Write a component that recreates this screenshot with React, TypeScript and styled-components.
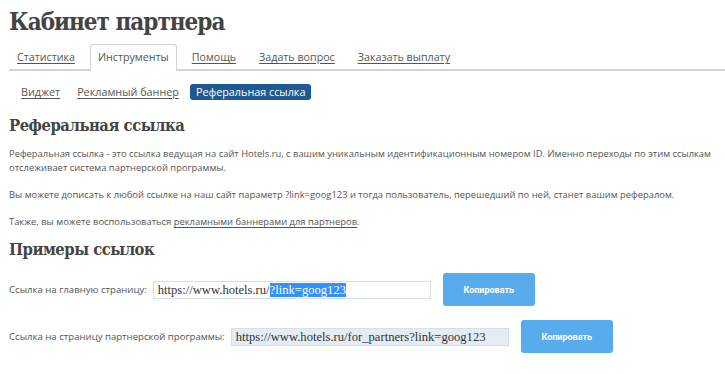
import React from "react";
import styled, { createGlobalStyle } from "styled-components";

const Global = createGlobalStyle`
  html, body { margin: 0; padding: 0; background: #fff; }
  body { font-family: "Open Sans", "Noto Sans", sans-serif; color: #555; }
`;

const Page = styled.div`
  padding: 6px 0 0 9px;
`;

const Title = styled.h1`
  margin: 0;
  font-family: "DejaVu Serif", serif;
  font-stretch: condensed;
  font-weight: 700;
  font-size: 24px;
  line-height: 32px;
  color: #444;
  letter-spacing: -1px;
`;

const Tabs = styled.div`
  display: flex;
  align-items: flex-end;
  margin-top: 6px;
  border-bottom: 2px solid #d3d3d3;
  height: 25px;
`;

const Tab = styled.a<{ $active?: boolean }>`
  display: block;
  box-sizing: border-box;
  height: ${(p) => (p.$active ? "27px" : "25px")};
  margin-bottom: ${(p) => (p.$active ? "-2px" : "0")};
  padding: 0 7px;
  margin-right: 7px;
  font-size: 10.7px;
  line-height: 24px;
  color: #555;
  text-decoration: ${(p) => (p.$active ? "none" : "underline")};
  text-underline-offset: 2px;
  background: #fff;
  border: ${(p) => (p.$active ? "1px solid #d3d3d3" : "1px solid transparent")};
  border-bottom: none;
  border-radius: 3px 3px 0 0;
  white-space: nowrap;
`;

const SubTabs = styled.div`
  display: flex;
  align-items: center;
  padding-left: 6px;
  margin-top: 13px;
  gap: 5px;
`;

const SubTab = styled.a<{ $active?: boolean }>`
  display: block;
  padding: 0 6px;
  height: 16px;
  line-height: 16px;
  font-size: 10.8px;
  border-radius: 3px;
  color: ${(p) => (p.$active ? "#fff" : "#555")};
  background: ${(p) => (p.$active ? "#1d5a94" : "transparent")};
  text-decoration: ${(p) => (p.$active ? "none" : "underline")};
  text-underline-offset: 2px;
  white-space: nowrap;
`;

const H2 = styled.h2<{ $top: number }>`
  margin: ${(p) => p.$top}px 0 0 0;
  font-family: "DejaVu Serif", serif;
  font-stretch: condensed;
  font-weight: 700;
  font-size: 16.5px;
  line-height: 22px;
  letter-spacing: -0.5px;
  color: #444;
`;

const Para = styled.p`
  margin: 0;
  font-size: 9.4px;
  line-height: 14px;
  color: #555;
  & + & { margin-top: 13px; }
`;

const TextBlock = styled.div`
  margin-top: 10px;
`;

const Link = styled.a`
  color: #555;
  text-decoration: underline;
  text-underline-offset: 2px;
`;

const Row = styled.div<{ $top: number }>`
  display: flex;
  align-items: center;
  margin-top: ${(p) => p.$top}px;
`;

const Label = styled.span`
  font-size: 9.6px;
  color: #555;
  margin-right: 6px;
  white-space: nowrap;
`;

const Field = styled.div<{ $disabled?: boolean }>`
  box-sizing: border-box;
  width: 278px;
  height: 18px;
  border: 1px solid #d4dfe8;
  background: ${(p) => (p.$disabled ? "#e4edf5" : "#fff")};
  padding: 0 4px;
  font-family: "Liberation Serif", "DejaVu Serif", serif;
  font-size: 12.6px;
  line-height: 16px;
  color: #333;
  white-space: nowrap;
  overflow: hidden;
`;

const Selected = styled.span`
  background: #3390ff;
  color: #fff;
`;

const CopyButton = styled.button`
  margin-left: 12px;
  width: 92px;
  height: 33px;
  border: none;
  border-radius: 3px;
  background: #58acee;
  color: #fff;
  font-family: Roboto, "Liberation Sans", sans-serif;
  font-weight: 700;
  font-size: 9px;
  cursor: pointer;
`;

export default function App() {
  return (
    <>
      <Global />
      <Page>
        <Title>Кабинет партнера</Title>
        <Tabs>
          <Tab>Статистика</Tab>
          <Tab $active>Инструменты</Tab>
          <Tab>Помощь</Tab>
          <Tab>Задать вопрос</Tab>
          <Tab>Заказать выплату</Tab>
        </Tabs>
        <SubTabs>
          <SubTab>Виджет</SubTab>
          <SubTab>Рекламный баннер</SubTab>
          <SubTab $active>Реферальная ссылка</SubTab>
        </SubTabs>
        <H2 $top={15}>Реферальная ссылка</H2>
        <TextBlock>
          <Para>
            Реферальная ссылка - это ссылка ведущая на сайт Hotels.ru, с вашим уникальным идентификационным номером ID. Именно переходы по этим ссылкам отслеживает система партнерской программы.
          </Para>
          <Para>
            Вы можете дописать к любой ссылке на наш сайт параметр ?link=goog123 и тогда пользователь, перешедший по ней, станет вашим рефералом.
          </Para>
          <Para>
            Также, вы можете воспользоваться <Link>рекламными баннерами для партнеров</Link>.
          </Para>
        </TextBlock>
        <H2 $top={10}>Примеры ссылок</H2>
        <Row $top={12}>
          <Label>Ссылка на главную страницу:</Label>
          <Field>
            https://www.hotels.ru/<Selected>?link=goog123</Selected>
          </Field>
          <CopyButton>Копировать</CopyButton>
        </Row>
        <Row $top={14}>
          <Label>Ссылка на страницу партнерской программы:</Label>
          <Field $disabled>https://www.hotels.ru/for_partners?link=goog123</Field>
          <CopyButton>Копировать</CopyButton>
        </Row>
      </Page>
    </>
  );
}
